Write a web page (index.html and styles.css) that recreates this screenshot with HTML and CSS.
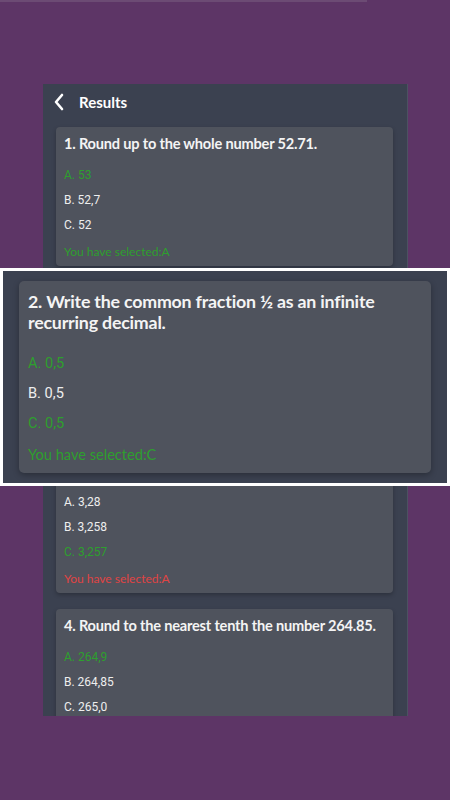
FILE: index.html
```html
<!DOCTYPE html>
<html>
<head>
<meta charset="utf-8">
<link rel="stylesheet" href="styles.css">
</head>
<body>
<div class="topline"></div>
<div class="phone">
  <div class="header">
    <svg class="back" width="12" height="18" viewBox="0 0 12 18"><path d="M9 2 L3 9 L9 16" fill="none" stroke="#ffffff" stroke-width="2.6" stroke-linecap="round" stroke-linejoin="round"/></svg>
    <span class="header-title">Results</span>
  </div>
  <div class="list">
    <div class="card">
      <div class="q">1. Round up to the whole number 52.71.</div>
      <div class="opt ok">A. 53</div>
      <div class="opt">B. 52,7</div>
      <div class="opt">C. 52</div>
      <div class="sel ok">You have selected:A</div>
    </div>
    <div class="card">
      <div class="q">2. Write the common fraction ½ as an infinite recurring decimal.</div>
      <div class="opt ok">A. 0,5</div>
      <div class="opt">B. 0,5</div>
      <div class="opt ok">C. 0,5</div>
      <div class="sel ok">You have selected:C</div>
    </div>
    <div class="card">
      <div class="q">3. Round to the thousandths the number 3.2573.</div>
      <div class="opt">A. 3,28</div>
      <div class="opt">B. 3,258</div>
      <div class="opt ok">C. 3,257</div>
      <div class="sel bad">You have selected:A</div>
    </div>
    <div class="card">
      <div class="q">4. Round to the nearest tenth the number 264.85.</div>
      <div class="opt ok">A. 264,9</div>
      <div class="opt">B. 264,85</div>
      <div class="opt">C. 265,0</div>
      <div class="sel ok">You have selected:A</div>
    </div>
  </div>
</div>
<div class="zoom">
  <div class="card card-big">
    <div class="q">2. Write the common fraction ½ as an infinite recurring decimal.</div>
    <div class="opt ok">A. 0,5</div>
    <div class="opt">B. 0,5</div>
    <div class="opt ok">C. 0,5</div>
    <div class="sel ok">You have selected:C</div>
  </div>
</div>
</body>
</html>
```

FILE: styles.css
```css
html, body {
  margin: 0;
  padding: 0;
}
body {
  width: 450px;
  height: 800px;
  overflow: hidden;
  background: #5d3566;
  position: relative;
  font-family: Lato, "Open Sans", sans-serif;
}
.topline {
  width: 367px;
  height: 2px;
  background: #6c4b74;
}
.phone {
  margin-top: 82px;
  margin-left: 43px;
  width: 364px;
  height: 632px;
  background: #3b4150;
  border-right: 1px solid #4c5262;
  overflow: hidden;
}
.header {
  height: 36px;
  display: flex;
  align-items: center;
  padding-left: 10px;
  gap: 14px;
}
.back {
  display: block;
}
.header-title {
  color: #ffffff;
  font-weight: 700;
  font-size: 15px;
}
.list {
  display: flex;
  flex-direction: column;
  gap: 16px;
  padding: 7px 0 0 13px;
}
.card {
  width: 337px;
  box-sizing: border-box;
  background: #4f535d;
  border-radius: 4px;
  padding: 8px 8px 0 8px;
  box-shadow: 0 2px 4px rgba(0, 0, 0, 0.25);
}
.q {
  color: #f4f4f4;
  font-weight: 700;
  font-size: 14.6px;
  line-height: 17px;
  letter-spacing: -0.2px;
  margin-bottom: 11px;
}
.opt {
  font-family: Roboto, "Liberation Sans", sans-serif;
  font-size: 12px;
  line-height: 25px;
  color: #eeeeee;
}
.sel {
  font-size: 12px;
  line-height: 28px;
}
.ok {
  color: #2e9f2e;
}
.bad {
  color: #e04444;
}
.zoom {
  position: absolute;
  left: 0;
  top: 268px;
  width: 450px;
  height: 218px;
  box-sizing: border-box;
  border: 3px solid #ffffff;
  background: #3b4150;
  padding: 10px 0 0 16px;
}
.card-big {
  width: 412px;
  padding: 10px 10px 1px 9px;
  border-radius: 5px;
  box-shadow: 0 2px 6px rgba(0, 0, 0, 0.3);
}
.card-big .q {
  font-size: 17.8px;
  line-height: 21px;
  letter-spacing: -0.2px;
  margin-bottom: 15px;
}
.card-big .opt {
  font-size: 14.6px;
  line-height: 30px;
}
.card-big .sel {
  font-size: 14.6px;
  line-height: 34px;
}
```
